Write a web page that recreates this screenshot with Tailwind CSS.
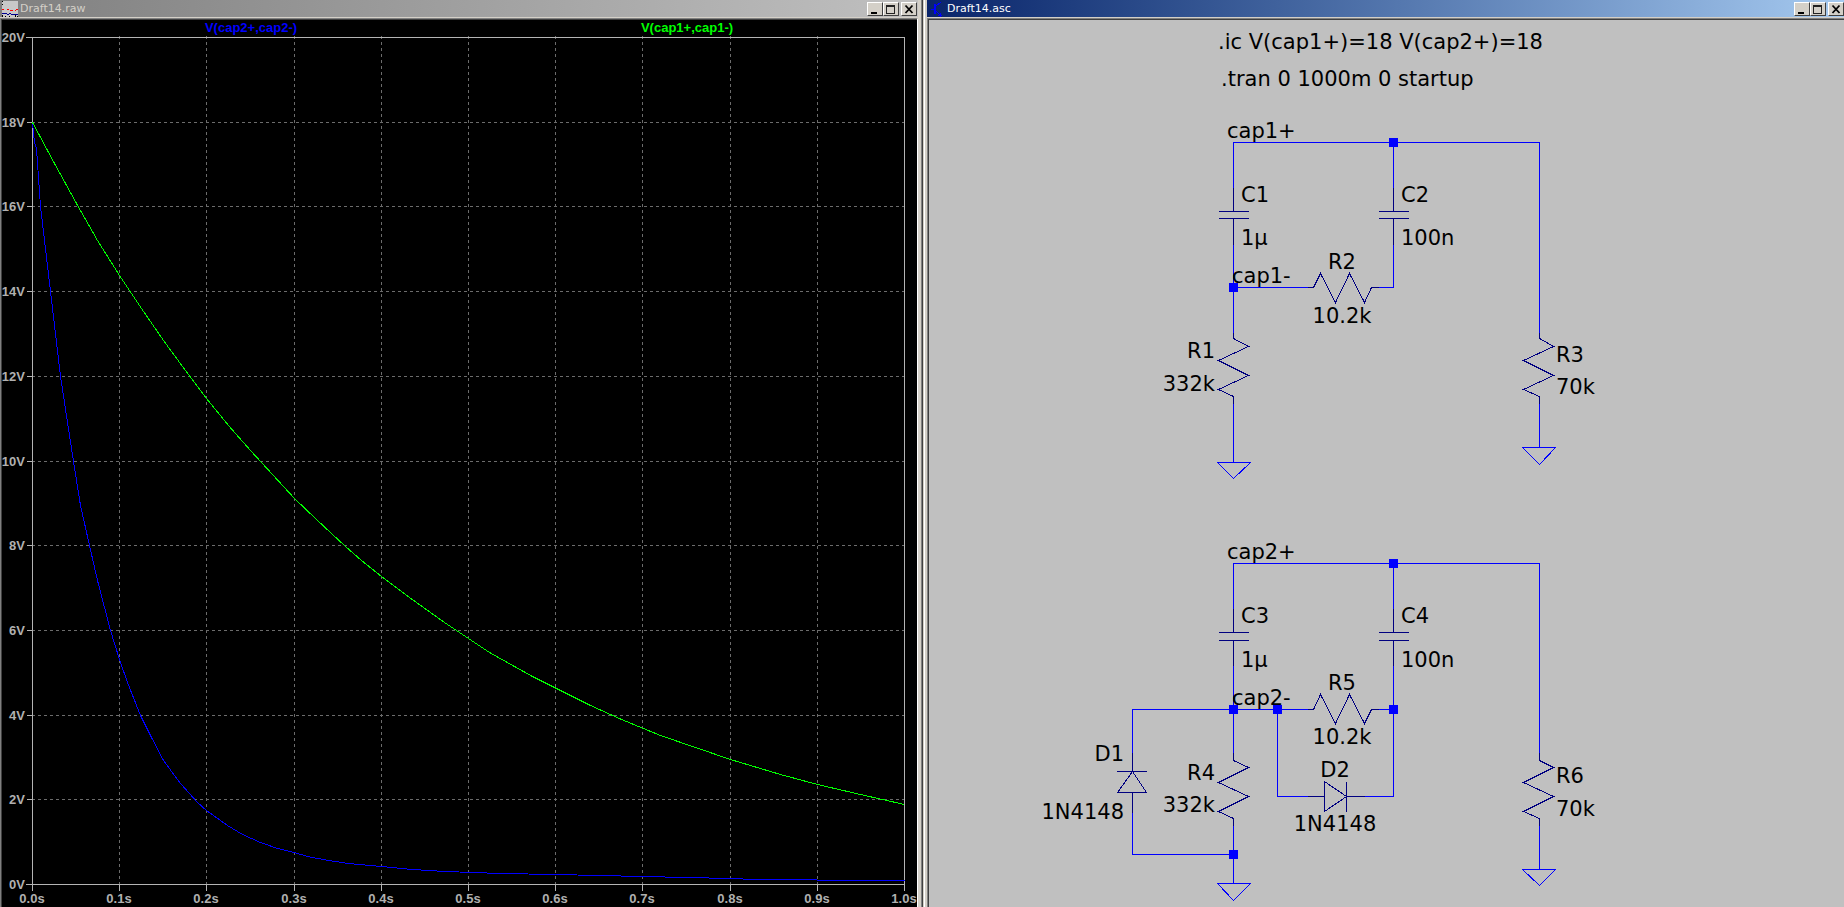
<!DOCTYPE html>
<html lang="en">
<head>
<meta charset="utf-8">
<title>Draft14</title>
<script src="https://cdn.jsdelivr.net/npm/@tailwindcss/browser@4"></script>
</head>
<body class="min-h-screen bg-[#d4d0c8]">
<main class="grid min-h-screen grid-cols-[923fr_921fr]">

  <!-- Waveform window -->
  <section class="flex min-w-0 flex-col border-r border-[#404040]" aria-label="Draft14.raw">
    <div class="flex grow flex-col border-r border-[#808080]">
      <header class="mr-[3px] flex h-[17px] items-center bg-linear-to-r from-[#808080] to-[#c0c0c0] pl-0.5 pr-px">
        <svg class="h-4 w-4 shrink-0" viewBox="0 0 16 16" shape-rendering="crispEdges" aria-hidden="true">
          <path d="M0 0h16v16H0z" fill="#c8c8c8"/>
          <path d="M0 0h1v1H0zM0 3h1v1H0zM0 14h1v2H0zM3 15h1v1H3zM7 15h1v1H7zM13 14h1v2h-1zM15 15h1v1h-1z" fill="#000"/>
          <path d="M0 8h2v1H0zM5 8h2v1H5zM8 9h3v1H8zM13 9h1v1h-1zM14 8h2v1h-2z" fill="#ff0000"/>
          <path d="M0 12h5v1H0zM5 13h2v1H5zM7 12h2v1H7zM9 13h7v1H9z" fill="#000090"/>
        </svg>
        <h1 class="ml-0.5 grow font-['DejaVu_Sans',sans-serif] text-[11px] leading-[18px] text-[#d4d0c8]">Draft14.raw</h1>
        <div class="flex">
          <button type="button" aria-label="Minimize" class="h-3.5 w-4 border border-t-white border-l-white border-r-[#404040] border-b-[#404040] bg-[#d4d0c8]"><svg class="h-3 w-3.5" viewBox="0 0 14 12" shape-rendering="crispEdges"><path d="M3 9h6v2H3z"/></svg></button>
          <button type="button" aria-label="Maximize" class="h-3.5 w-4 border border-t-white border-l-white border-r-[#404040] border-b-[#404040] bg-[#d4d0c8]"><svg class="h-3 w-3.5" viewBox="0 0 14 12" shape-rendering="crispEdges"><path d="M2 2h9v9H2zM3 4v6h7V4z" fill="#222" fill-rule="evenodd"/></svg></button>
          <button type="button" aria-label="Close" class="ml-0.5 h-3.5 w-4 border border-t-white border-l-white border-r-[#404040] border-b-[#404040] bg-[#d4d0c8]"><svg class="h-3 w-3.5" viewBox="0 0 14 12"><path d="M3.500 2.500l7 7.500M10.500 2.500l-7 7.500" stroke="#000" stroke-width="1.800"/></svg></button>
        </div>
      </header>
      <div class="mr-[3px] grow border-t border-[#d4d0c8]">
        <div class="h-full border-t border-l border-r border-t-[#808080] border-l-[#808080] border-r-white">
          <div class="h-full border-t border-l border-[#404040] bg-black">
            <svg class="block h-auto w-full" viewBox="2 20 915 887" role="img" aria-label="Capacitor discharge curves">
              <g transform="translate(0.5 0.5)" fill="none" stroke-width="1" shape-rendering="crispEdges">
                <path stroke="#6c6c6c" stroke-dasharray="3 3" d="M119 35.500V884M206 35.500V884M294 35.500V884M381 35.500V884M468 35.500V884M555 35.500V884M642 35.500V884M730 35.500V884M817 35.500V884"/>
                <path stroke="#6c6c6c" stroke-dasharray="3 3" d="M31.500 122H904M31.500 206H904M31.500 291H904M31.500 376H904M31.500 461H904M31.500 545H904M31.500 630H904M31.500 715H904M31.500 799H904"/>
                <path stroke="#b4b4b4" d="M25.500 37H904V890M32 37V890M25.500 884H904M26 122h6M26 206h6M26 291h6M26 376h6M26 461h6M26 545h6M26 630h6M26 715h6M26 799h6M119 884v6M206 884v6M294 884v6M381 884v6M468 884v6M555 884v6M642 884v6M730 884v6M817 884v6"/>
                <path stroke="#0000ff" d="M32 123L34 142L36 148L40 206L50 291L60 376L73 461L80 505L89 545L97 580L110 630L119 659L127 682L140 715L150 735L163 760L180 783L197 802L206 810L227 825L242 834L260 842L277 848L294 852L307 856L328 860L348 863L381 866L412 869L445 871L500 873L555 874L642 876L730 878L742 878L743 879L816 879L817 880H904"/>
                <path stroke="#00ff00" d="M32 122L54 163L76 203L97 240L119 275L141 308L163 340L185 370L206 398L228 425L250 450L272 474L294 498L316 519L331 533L345 546L361 560L381 576L409 597L444 622L468 638L489 652L514 666L532 676L556 688L590 705L621 719L660 735L695 747L730 759L780 774L817 784L860 794L904 804"/>
              </g>
              <g class="font-['Liberation_Sans',Arial,sans-serif] text-[13px] font-bold" text-anchor="middle">
                <text x="251" y="32" fill="#0000ff">V(cap2+,cap2-)</text>
                <text x="687" y="32" fill="#00ff00">V(cap1+,cap1-)</text>
              </g>
              <g class="font-['Liberation_Sans',Arial,sans-serif] text-[13px] font-bold" text-anchor="end" fill="#b0b0b0">
                <text x="25" y="42">20V</text><text x="25" y="127">18V</text><text x="25" y="211">16V</text><text x="25" y="296">14V</text><text x="25" y="381">12V</text><text x="25" y="466">10V</text><text x="25" y="550">8V</text><text x="25" y="635">6V</text><text x="25" y="720">4V</text><text x="25" y="804">2V</text><text x="25" y="889">0V</text>
              </g>
              <g class="font-['Liberation_Sans',Arial,sans-serif] text-[13px] font-bold" text-anchor="middle" fill="#b0b0b0">
                <text x="32" y="903">0.0s</text><text x="119" y="903">0.1s</text><text x="206" y="903">0.2s</text><text x="294" y="903">0.3s</text><text x="381" y="903">0.4s</text><text x="468" y="903">0.5s</text><text x="555" y="903">0.6s</text><text x="642" y="903">0.7s</text><text x="730" y="903">0.8s</text><text x="817" y="903">0.9s</text><text x="904" y="903">1.0s</text>
              </g>
            </svg>
          </div>
        </div>
      </div>
    </div>
  </section>

  <!-- Schematic window -->
  <section class="flex min-w-0 flex-col border-l border-[#d4d0c8]" aria-label="Draft14.asc">
    <div class="flex grow flex-col border-l border-white">
      <header class="ml-0.5 flex h-[17px] items-center bg-linear-to-r from-[#0a246a] to-[#a6caf0] pl-1">
        <svg class="h-4 w-4 shrink-0" viewBox="0 0 16 16" fill="none" stroke="#0000ff" shape-rendering="crispEdges" aria-hidden="true">
          <path d="M0 8h4M10 1L5 5M5 10l5 5"/>
          <path d="M4 3v10" stroke-width="2"/>
          <path d="M7 14h4M9 12v4" stroke-width="1"/>
        </svg>
        <h1 class="grow font-['DejaVu_Sans',sans-serif] text-[11px] leading-[18px] text-white">Draft14.asc</h1>
        <div class="flex">
          <button type="button" aria-label="Minimize" class="h-3.5 w-4 border border-t-white border-l-white border-r-[#404040] border-b-[#404040] bg-[#d4d0c8]"><svg class="h-3 w-3.5" viewBox="0 0 14 12" shape-rendering="crispEdges"><path d="M3 9h6v2H3z"/></svg></button>
          <button type="button" aria-label="Maximize" class="h-3.5 w-4 border border-t-white border-l-white border-r-[#404040] border-b-[#404040] bg-[#d4d0c8]"><svg class="h-3 w-3.5" viewBox="0 0 14 12" shape-rendering="crispEdges"><path d="M2 2h9v9H2zM3 4v6h7V4z" fill="#222" fill-rule="evenodd"/></svg></button>
          <button type="button" aria-label="Close" class="ml-0.5 h-3.5 w-4 border border-t-white border-l-white border-r-[#404040] border-b-[#404040] bg-[#d4d0c8]"><svg class="h-3 w-3.5" viewBox="0 0 14 12"><path d="M3.500 2.500l7 7.500M10.500 2.500l-7 7.500" stroke="#000" stroke-width="1.800"/></svg></button>
        </div>
      </header>
      <div class="ml-0.5 grow border-t border-[#d4d0c8]">
        <div class="h-full border-t border-l border-[#808080]">
          <div class="h-full border-t border-l border-[#404040] bg-[#c0c0c0]">
            <svg class="block h-auto w-full" viewBox="929 20 915 887" role="img" aria-label="Schematic">
              <!-- Wires and grounds -->
              <g transform="translate(0.5 0.5)" fill="none" stroke="#0000ff" stroke-width="1" shape-rendering="crispEdges">
                <path d="M1233 187V142H1539V332M1393 142V187M1233 244V332M1233 287H1307M1378 287H1393V244M1233 403V462M1539 403V447"/>
                <path d="M1217 462H1250L1233 478ZM1522 447H1555L1539 464Z"/>
                <path d="M1233 608V563H1539V752M1393 563V608M1233 665V752M1132 752V709H1307M1378 709H1393V665M1393 709V796H1364M1277 709V796H1307M1132 812V854H1233M1233 825V883M1539 825V869"/>
                <path d="M1217 883H1250L1233 900ZM1522 869H1555L1539 885Z"/>
              </g>
              <!-- Component bodies -->
              <g transform="translate(0.5 0.5)" fill="none" stroke="#000080" stroke-width="1" shape-rendering="crispEdges">
                <path d="M1233 187V211M1218 211H1248M1218 218H1248M1233 218V244M1393 187V211M1378 211H1408M1378 218H1408M1393 218V244"/>
                <path d="M1307 287H1313L1320 273L1335 302L1349 273L1364 302L1371 287H1378"/>
                <path d="M1233 332V338L1248 346L1218 360L1248 375L1218 389L1233 396V403"/>
                <path d="M1539 332V338L1553 346L1523 360L1553 375L1523 389L1539 396V403"/>
                <path d="M1233 608V632M1218 632H1248M1218 640H1248M1233 640V665M1393 608V632M1378 632H1408M1378 640H1408M1393 640V665"/>
                <path d="M1307 709H1313L1320 694L1335 723L1349 694L1364 723L1371 709H1378"/>
                <path d="M1233 752V760L1248 767L1218 782L1248 796L1218 811L1233 818V825"/>
                <path d="M1539 752V760L1553 767L1523 782L1553 796L1523 811L1539 818V825"/>
                <path d="M1132 752V771M1116 771H1146M1132 771L1146 792H1117L1132 771M1132 792V812"/>
                <path d="M1307 796H1324M1324 781V811L1346 796L1324 781M1346 781V811M1346 796H1364"/>
              </g>
              <!-- Junctions -->
              <path fill="#0000ff" shape-rendering="crispEdges" d="M1389 138h9v9h-9zM1229 283h9v9h-9zM1389 559h9v9h-9zM1229 705h9v9h-9zM1273 705h9v9h-9zM1389 705h9v9h-9zM1229 850h9v9h-9z"/>
              <!-- Labels -->
              <g class="font-['DejaVu_Sans',sans-serif] text-[21px]" fill="#000">
                <text x="1218" y="49">.ic V(cap1+)=18 V(cap2+)=18</text>
                <text x="1221" y="86">.tran 0 1000m 0 startup</text>
                <text x="1227" y="138">cap1+</text>
                <text x="1241" y="202">C1</text><text x="1241" y="245">1µ</text>
                <text x="1401" y="202">C2</text><text x="1401" y="245">100n</text>
                <text x="1232" y="283">cap1-</text>
                <text x="1556" y="362">R3</text><text x="1556" y="394">70k</text>
                <text x="1227" y="559">cap2+</text>
                <text x="1241" y="623">C3</text><text x="1241" y="667">1µ</text>
                <text x="1401" y="623">C4</text><text x="1401" y="667">100n</text>
                <text x="1232" y="705">cap2-</text>
                <text x="1556" y="783">R6</text><text x="1556" y="816">70k</text>
                <g text-anchor="middle">
                  <text x="1342" y="269">R2</text><text x="1342" y="323">10.2k</text>
                  <text x="1342" y="690">R5</text><text x="1342" y="744">10.2k</text>
                  <text x="1335" y="777">D2</text><text x="1335" y="831">1N4148</text>
                </g>
                <g text-anchor="end">
                  <text x="1215" y="358">R1</text><text x="1215" y="391">332k</text>
                  <text x="1215" y="780">R4</text><text x="1215" y="812">332k</text>
                  <text x="1124" y="761">D1</text><text x="1124" y="819">1N4148</text>
                </g>
              </g>
            </svg>
          </div>
        </div>
      </div>
    </div>
  </section>
</main>
</body>
</html>
